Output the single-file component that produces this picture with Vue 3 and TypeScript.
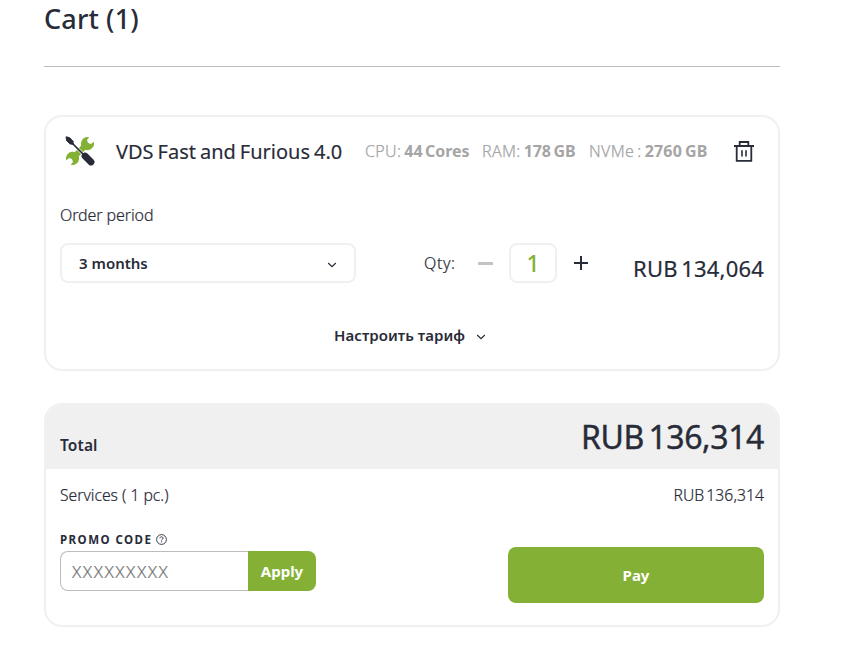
<script setup lang="ts">
import { ref } from 'vue'

interface Spec {
  label: string
  value: string
  cls: string
}

const specs: Spec[] = [
  { label: 'CPU:', value: '44 Cores', cls: 'cpu' },
  { label: 'RAM:', value: '178 GB', cls: 'ram' },
  { label: 'NVMe :', value: '2760 GB', cls: 'nvme' },
]
const qty = ref(1)
const promo = ref('')
</script>

<template>
  <main class="cart">
    <h1>Cart (1)</h1>

    <section class="card item">
      <header class="item-head">
        <svg class="tools" viewBox="0 0 30 30" width="30" height="30">
          <path d="M7 23 23 7" stroke="#84b135" stroke-width="6" />
          <path d="M24.2 1.2A6.6 6.6 0 1 0 28.8 5.8L26 8 23 7.1 22 4.1Z" fill="#84b135" />
          <path d="M5.8 28.8A6.6 6.6 0 1 0 1.2 24.2L4 22 7 22.9 8 25.9Z" fill="#84b135" />
          <path d="M5 5 20 20" stroke="#fff" stroke-width="2.6" />
          <path d="M5 5 20 20" stroke="#282b38" stroke-width="1.7" />
          <path d="M1 .8 4.7 1.7 8 5.2 8.2 8.2 5.2 8 1.7 4.7Z" fill="#282b38" stroke="#282b38" stroke-linejoin="round" />
          <path d="M20 20 26 26" stroke="#282b38" stroke-width="6.8" stroke-linecap="round" />
        </svg>
        <h2>VDS Fast and Furious 4.0</h2>
        <ul class="specs">
          <li v-for="s in specs" :key="s.cls" :class="s.cls">{{ s.label }} <b>{{ s.value }}</b></li>
        </ul>
        <button class="trash" aria-label="Remove">
          <svg viewBox="0 0 20 21" width="20" height="21" fill="none" stroke="#282b38" stroke-width="1.8">
            <path d="M0 5h20M5.7 5V1h8.6v4M2.7 5v14.8h14.6V5" />
            <path d="M8 9.2v6.2M12 9.2v6.2" stroke-width="1.6" />
          </svg>
        </button>
      </header>

      <div class="period">Order period</div>
      <div class="controls">
        <button class="select">
          <span>3 months</span>
          <svg viewBox="0 0 10 6" width="10" height="6"><path d="m1.2 1 3.8 3.6L8.8 1" fill="none" stroke="#282b38" stroke-width="1.2" /></svg>
        </button>
        <span class="qty-label">Qty:</span>
        <button class="minus" aria-label="Decrease" @click="qty = Math.max(1, qty - 1)"></button>
        <span class="qty">{{ qty }}</span>
        <button class="plus" aria-label="Increase" @click="qty++">
          <svg viewBox="0 0 14 14" width="14" height="14"><path d="M7 0v14M0 7h14" stroke="#282b38" stroke-width="2" /></svg>
        </button>
        <span class="price">RUB 134,064</span>
      </div>

      <button class="configure">
        <span>Настроить тариф</span>
        <svg viewBox="0 0 10 6" width="10" height="6"><path d="m1.2 1 3.8 3.6L8.8 1" fill="none" stroke="#282b38" stroke-width="1.2" /></svg>
      </button>
    </section>

    <section class="card summary">
      <header class="total">
        <span class="total-label">Total</span>
        <span class="total-sum">RUB 136,314</span>
      </header>
      <div class="services">
        <span>Services ( 1 pc.)</span>
        <span class="services-sum">RUB 136,314</span>
      </div>
      <div class="checkout">
        <div class="promo">
          <label for="promo">
            <span>PROMO CODE</span>
            <svg viewBox="0 0 11 11" width="11" height="11" fill="none" stroke="#282b38" stroke-width=".9">
              <circle cx="5.5" cy="5.5" r="4.9" />
              <path d="M3.9 4.3c0-2 3.2-2 3.2 0 0 1-1.6 1.1-1.6 2.2M5.5 7.4v1" />
            </svg>
          </label>
          <div class="promo-row">
            <input id="promo" v-model="promo" placeholder="XXXXXXXXX" />
            <button class="apply">Apply</button>
          </div>
        </div>
        <button class="pay">Pay</button>
      </div>
    </section>
  </main>
</template>

<style>
body { background: #fff; }
</style>

<style scoped>
* { box-sizing: border-box; }
.cart {
  width: 780px;
  padding-left: 44px;
  color: #282b38;
  font-family: "Noto Sans", "Open Sans", sans-serif;
  font-size: 16px;
  white-space: nowrap;
}
button {
  display: flex;
  align-items: center;
  border: 0;
  padding: 0;
  background: none;
  color: inherit;
  font: inherit;
  cursor: pointer;
}
svg { display: block; flex: none; }
h1, h2, ul { margin: 0; padding: 0; font-weight: 400; }
h1 {
  height: 67px;
  border-bottom: 1px solid #bcbcbc;
  font-size: 27px;
  font-weight: 500;
  line-height: 38px;
  letter-spacing: .15px;
}
.card { border: 2px solid #f0f0f0; border-radius: 18px; }
.item { height: 256px; margin-top: 48px; padding: 14px 14px 0; }
.item-head { display: flex; align-items: center; height: 42px; }
.tools { margin: -2px 0 0 5px; }
h2 { width: 249px; margin-left: 21px; font-size: 20px; line-height: 30px; word-spacing: -1.2px; -webkit-text-stroke: .15px; }
.specs { display: flex; margin-top: -2px; list-style: none; color: #a5a5a5; font-size: 16px; font-weight: 300; letter-spacing: .35px; word-spacing: -1.4px; -webkit-text-stroke: .25px; }
.specs b { font-weight: 700; letter-spacing: -.1px; -webkit-text-stroke: 0; }
.cpu { width: 117px; }
.ram { width: 107px; }
.nvme { width: 145px; }
.nvme b { letter-spacing: .2px; }
.trash { margin-top: -1px; }
.period { margin-top: 30px; font-weight: 300; line-height: 24px; letter-spacing: -.1px; -webkit-text-stroke: .2px; }
.controls { display: flex; align-items: center; height: 40px; margin-top: 16px; }
.select {
  justify-content: space-between;
  width: 296px;
  height: 40px;
  padding: 0 17px;
  border: 2px solid #f0f0f0;
  border-radius: 8px;
  font-size: 15px;
  font-weight: 600;
}
.select svg { margin-top: 3px; }
.qty-label { width: 54px; margin-left: 68px; font-weight: 300; letter-spacing: .6px; -webkit-text-stroke: .2px; }
.minus { width: 15px; height: 3px; background: #c4c4c4; }
.qty {
  width: 48px;
  height: 40px;
  margin-left: 16px;
  border: 2px solid #f0f0f0;
  border-radius: 8px;
  color: #84b135;
  font-size: 23px;
  font-weight: 500;
  line-height: 36px;
  text-align: center;
}
.plus { margin-left: 17px; }
.price { margin: 10px 0 0 auto; font-size: 22px; line-height: 30px; letter-spacing: .2px; word-spacing: -2.5px; -webkit-text-stroke: .2px; }
.configure { gap: 11px; margin: 40px 0 0 274px; font-size: 15px; font-weight: 600; line-height: 24px; letter-spacing: .05px; }
.configure svg { margin-top: 3px; }
.summary { height: 224px; margin-top: 32px; overflow: hidden; }
.total { display: flex; justify-content: space-between; height: 64px; padding: 0 14px; background: #f0f0f0; }
.total-label { padding-top: 28px; font-size: 15.5px; font-weight: 600; line-height: 24px; letter-spacing: .1px; }
.total-sum { padding-top: 10px; font-size: 32px; font-weight: 400; line-height: 44px; letter-spacing: -.4px; word-spacing: -3.5px; -webkit-text-stroke: .4px; }
.services { display: flex; justify-content: space-between; padding: 14px 14px 0; font-size: 15.7px; font-weight: 300; line-height: 24px; -webkit-text-stroke: .2px; }
.services-sum { letter-spacing: .05px; word-spacing: -2px; }
.checkout { display: flex; justify-content: space-between; padding: 25px 14px 0; }
.promo label { display: flex; align-items: center; gap: 4px; height: 15px; font-size: 11.5px; font-weight: 700; letter-spacing: 1.45px; }
.promo-row { display: flex; margin-top: 4px; }
.promo input {
  width: 188px;
  height: 40px;
  padding: 1px 0 0 11px;
  border: 1px solid #bcbcbc;
  border-right: 0;
  border-radius: 8px 0 0 8px;
  outline: 0;
  font: 300 17px "Noto Sans", "Open Sans", sans-serif;
  letter-spacing: 1.5px;
  -webkit-text-stroke: .2px;
}
.promo input::placeholder { color: #757575; }
.apply, .pay { justify-content: center; background: #84b135; color: #fff; font-size: 15px; font-weight: 700; }
.apply { width: 68px; height: 40px; border-radius: 0 8px 8px 0; }
.pay { width: 256px; height: 56px; margin-top: 15px; border-radius: 8px; }
</style>
